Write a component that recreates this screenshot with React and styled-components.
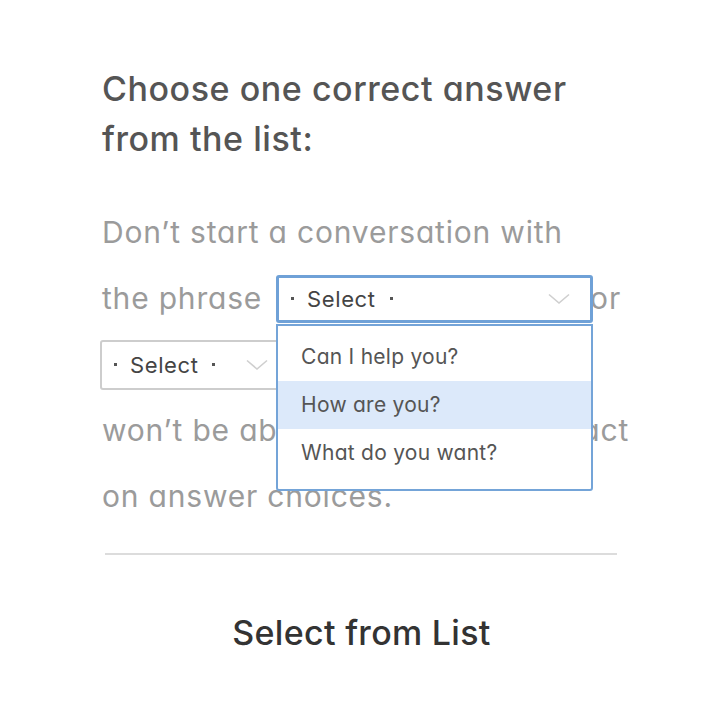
import React from "react";
import styled, { createGlobalStyle } from "styled-components";

const Global = createGlobalStyle`
  html, body { margin: 0; padding: 0; background: #fff; }
  body { font-family: Inter, "Noto Sans", sans-serif; font-feature-settings: "cv11" 1; }
`;

const Page = styled.main`
  width: 721px;
  min-height: 720px;
  box-sizing: border-box;
  padding: 64px 0 0 0;
  display: flex;
  flex-direction: column;
`;

const Content = styled.section`
  padding-left: 102px;
`;

const Heading = styled.h2`
  margin: 0;
  font-size: 34px;
  line-height: 50px;
  font-weight: 500;
  color: #555555;
  letter-spacing: 0.55px;
`;

const Passage = styled.p`
  margin: 35px 0 0 0;
  font-size: 30px;
  line-height: 66px;
  font-weight: 400;
  color: #9b9b9b;
  white-space: nowrap;
  letter-spacing: 0.8px;
`;

const SelectWrap = styled.span`
  position: relative;
  display: inline-block;
  vertical-align: middle;
  margin-left: ${(p) => p.$ml || 0}px;
  margin-right: ${(p) => p.$mr || 0}px;
  letter-spacing: 0;
  z-index: ${(p) => (p.$open ? 2 : 1)};
`;

const SelectBox = styled.span`
  box-sizing: border-box;
  display: flex;
  align-items: center;
  width: ${(p) => p.$w}px;
  height: ${(p) => (p.$open ? 48 : 50)}px;
  padding: 0 20px 0 12px;
  border: ${(p) => (p.$open ? "3px solid #6fa1d7" : "2px solid #cdcdcd")};
  border-radius: 3px;
  background: #fff;
  font-size: 22px;
  letter-spacing: 0.6px;
  line-height: 1;
  color: #444;
  position: relative;
  top: ${(p) => (p.$open ? -2 : -2)}px;
`;

const Dot = styled.span`
  display: inline-block;
  width: 3px;
  height: 3px;
  background: #555;
  margin: 0 ${(p) => p.$r || 0}px 0 ${(p) => p.$l || 0}px;
`;

const Label = styled.span`
  flex: 1;
  display: flex;
  align-items: center;
`;

const Chevron = () => (
  <svg width="22" height="12" viewBox="0 0 22 12" fill="none">
    <path d="M1 1.5 L11 10 L21 1.5" stroke="#cfcfcf" strokeWidth="1.6" />
  </svg>
);

const Menu = styled.ul`
  position: absolute;
  left: 0;
  top: 47px;
  box-sizing: border-box;
  width: 317px;
  height: 167px;
  margin: 0;
  padding: 7px 0 0 0;
  list-style: none;
  background: #fff;
  border: 2px solid #74a4d8;
  border-radius: 0 0 3px 3px;
`;

const Option = styled.li`
  height: 48px;
  display: flex;
  align-items: center;
  padding-left: 23px;
  font-size: 21px;
  letter-spacing: 0.25px;
  line-height: 1;
  color: #555;
  background: ${(p) => (p.$active ? "#dce9fa" : "transparent")};
`;

const Divider = styled.hr`
  width: 512px;
  height: 2px;
  border: 0;
  margin: 24px auto 0;
  background: #dcdcdc;
`;

const Footer = styled.h1`
  margin: 57px 0 0 0;
  text-align: center;
  font-size: 34px;
  font-weight: 500;
  letter-spacing: 0.3px;
  color: #333;
  padding-left: 2px;
`;

function Select({ width, open, options, active, ml, mr }) {
  return (
    <SelectWrap $open={open} $ml={ml} $mr={mr}>
      <SelectBox $w={width} $open={open}>
        <Label>
          <Dot $r={13} />
          Select
          <Dot $l={14} />
        </Label>
        <Chevron />
      </SelectBox>
      {open && (
        <Menu>
          {options.map((o, i) => (
            <Option key={o} $active={i === active}>
              {o}
            </Option>
          ))}
        </Menu>
      )}
    </SelectWrap>
  );
}

export default function App() {
  return (
    <>
      <Global />
      <Page>
        <Content>
          <Heading>
            Choose one correct answer
            <br />
            from the list:
          </Heading>
          <Passage>
            Don’t start a conversation with
            <br />
            the phrase
            <Select
              width={317}
              open
              ml={14}
              mr={-3}
              active={1}
              options={["Can I help you?", "How are you?", "What do you want?"]}
            />
            or
            <br />
            <Select width={190} ml={-2} mr={8} />
            as you
            <br />
            won’t be able to make good impact
            <br />
            on answer choices.
          </Passage>
        </Content>
        <Divider />
        <Footer>Select from List</Footer>
      </Page>
    </>
  );
}
